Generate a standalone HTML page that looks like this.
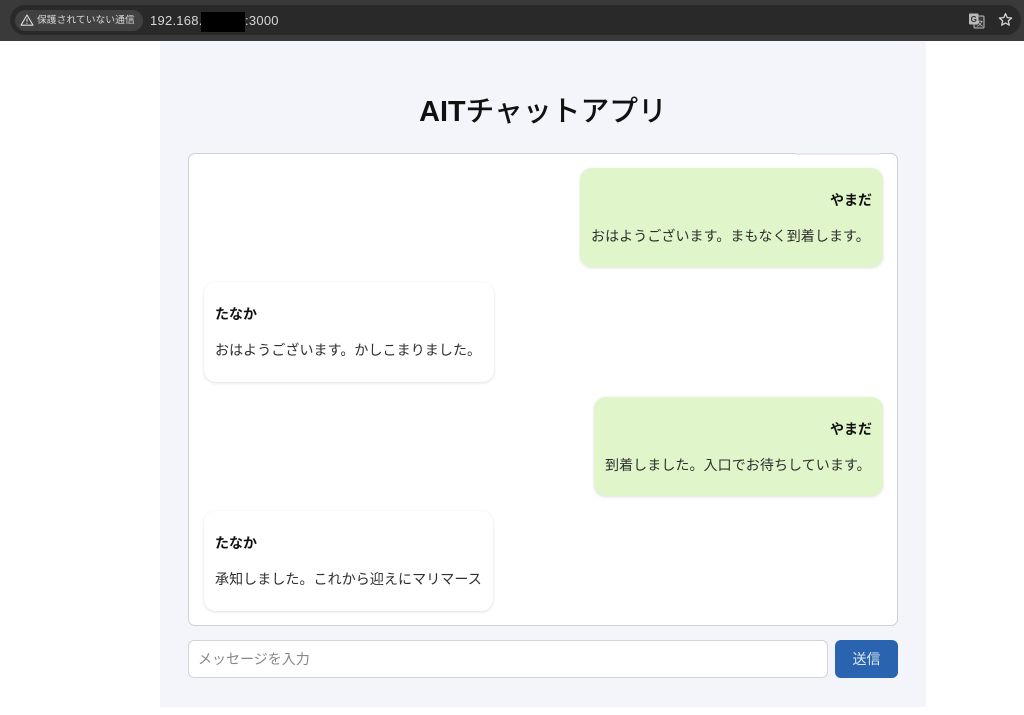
<!DOCTYPE html>
<html lang="ja">
<head>
<meta charset="utf-8">
<title>AITチャットアプリ</title>
<style>
html,body{margin:0;padding:0;width:1024px;height:715px;overflow:hidden;background:#fff;font-family:"Liberation Sans","Noto Sans CJK JP",sans-serif;color:#1a1a1a}
*{box-sizing:border-box}
.abs{position:absolute}
.bar{left:0;top:0;width:1024px;height:41px;background:#3a3a3a}
.omni{left:10px;top:5px;width:1011px;height:30px;background:#292929;border-radius:15px}
.chip{left:15px;top:10px;width:128px;height:21px;background:#414141;border-radius:11px}
.warn{left:37px;top:13px;font-size:9.8px;line-height:15px;color:#d8d8d8;white-space:nowrap}
.url{left:150px;top:12px;font-size:13px;line-height:17px;color:#d6d6d6;letter-spacing:.25px;white-space:nowrap}
.mask{left:201px;top:12px;width:44px;height:20px;background:#000}
.page{left:160px;top:41px;width:766px;height:666px;background:#f3f5fa}
h1{position:absolute;left:160px;top:93px;width:766px;margin:0;text-align:center;font-size:28.8px;line-height:38px;font-weight:500;color:#111}
h1 b{font-weight:700}
.chat{left:188px;top:153px;width:710px;height:473px;background:#fff;border:1px solid #cfd0d4;border-radius:7px}
.fade{left:795px;top:153px;width:85px;height:2px;background:#e9e9ec}
.msg{position:absolute;border-radius:12px;box-shadow:0 1px 3px rgba(0,0,0,.13);font-size:14px}
.me{background:#e0f5c9}
.you{background:#fff}
.n{position:absolute;font-weight:700;line-height:20px;color:#111;white-space:nowrap}
.t{position:absolute;line-height:20px;color:#2e2e2e;white-space:nowrap;left:11px;top:58px;letter-spacing:.08px}
.me .n{right:11px;top:22px}
.you .n{left:11px;top:22px}
.input{left:188px;top:640px;width:640px;height:38px;background:#fff;border:1px solid #d3d4d7;border-radius:6px;padding-left:9px;font-size:14px;line-height:36px;color:#85878b}
.btn{left:835px;top:640px;width:63px;height:38px;background:#2a64b0;border-radius:6px;color:#dfe8f4;font-size:14px;line-height:38px;text-align:center}
</style>
</head>
<body>
<div class="abs bar"></div>
<div class="abs omni"></div>
<div class="abs chip"></div>
<svg class="abs" style="left:20px;top:13px" width="14" height="14" viewBox="0 0 14 14"><path d="M7 2 L13 12.2 H1 Z" fill="none" stroke="#dcdcdc" stroke-width="1.1" stroke-linejoin="round"/><path d="M7 5.6V8.8M7 9.9v1" stroke="#dcdcdc" stroke-width="1"/></svg>
<div class="abs warn">保護されていない通信</div>
<div class="abs url">192.168.</div>
<div class="abs mask"></div>
<div class="abs url" style="left:245px">:3000</div>
<svg class="abs" style="left:968px;top:12px" width="18" height="18" viewBox="0 0 18 18"><rect x="6" y="4" width="10" height="12" rx="1" fill="#3a3a3a" stroke="#bdbdbd" stroke-width="1"/><rect x="1" y="1.5" width="9.5" height="11" rx="1" fill="#b9b9b9"/><text x="5.7" y="10" font-size="8" font-weight="700" text-anchor="middle" fill="#333" font-family="Liberation Sans">G</text><text x="12" y="13.5" font-size="6.5" text-anchor="middle" fill="#cfcfcf" font-family="Noto Sans CJK JP">文</text></svg>
<svg class="abs" style="left:998px;top:12px" width="15" height="15" viewBox="0 0 15 15"><path d="M7.5 1.6 L9.2 5.6 L13.6 6 L10.3 8.9 L11.3 13.2 L7.5 10.9 L3.7 13.2 L4.7 8.9 L1.4 6 L5.8 5.6 Z" fill="none" stroke="#d4d4d4" stroke-width="1.3" stroke-linejoin="round"/></svg>

<div class="abs page"></div>
<h1><b>AIT</b>チャットアプリ</h1>
<div class="abs chat"></div>
<div class="abs fade"></div>

<div class="msg me" style="left:580px;top:168px;width:303px;height:99px"><div class="n">やまだ</div><div class="t">おはようございます。まもなく到着します。</div></div>
<div class="msg you" style="left:204px;top:282px;width:290px;height:100px"><div class="n">たなか</div><div class="t">おはようございます。かしこまりました。</div></div>
<div class="msg me" style="left:594px;top:397px;width:289px;height:99px"><div class="n">やまだ</div><div class="t">到着しました。入口でお待ちしています。</div></div>
<div class="msg you" style="left:204px;top:511px;width:289px;height:100px"><div class="n">たなか</div><div class="t">承知しました。これから迎えにマリマース</div></div>

<div class="abs input">メッセージを入力</div>
<div class="abs btn">送信</div>
</body>
</html>
